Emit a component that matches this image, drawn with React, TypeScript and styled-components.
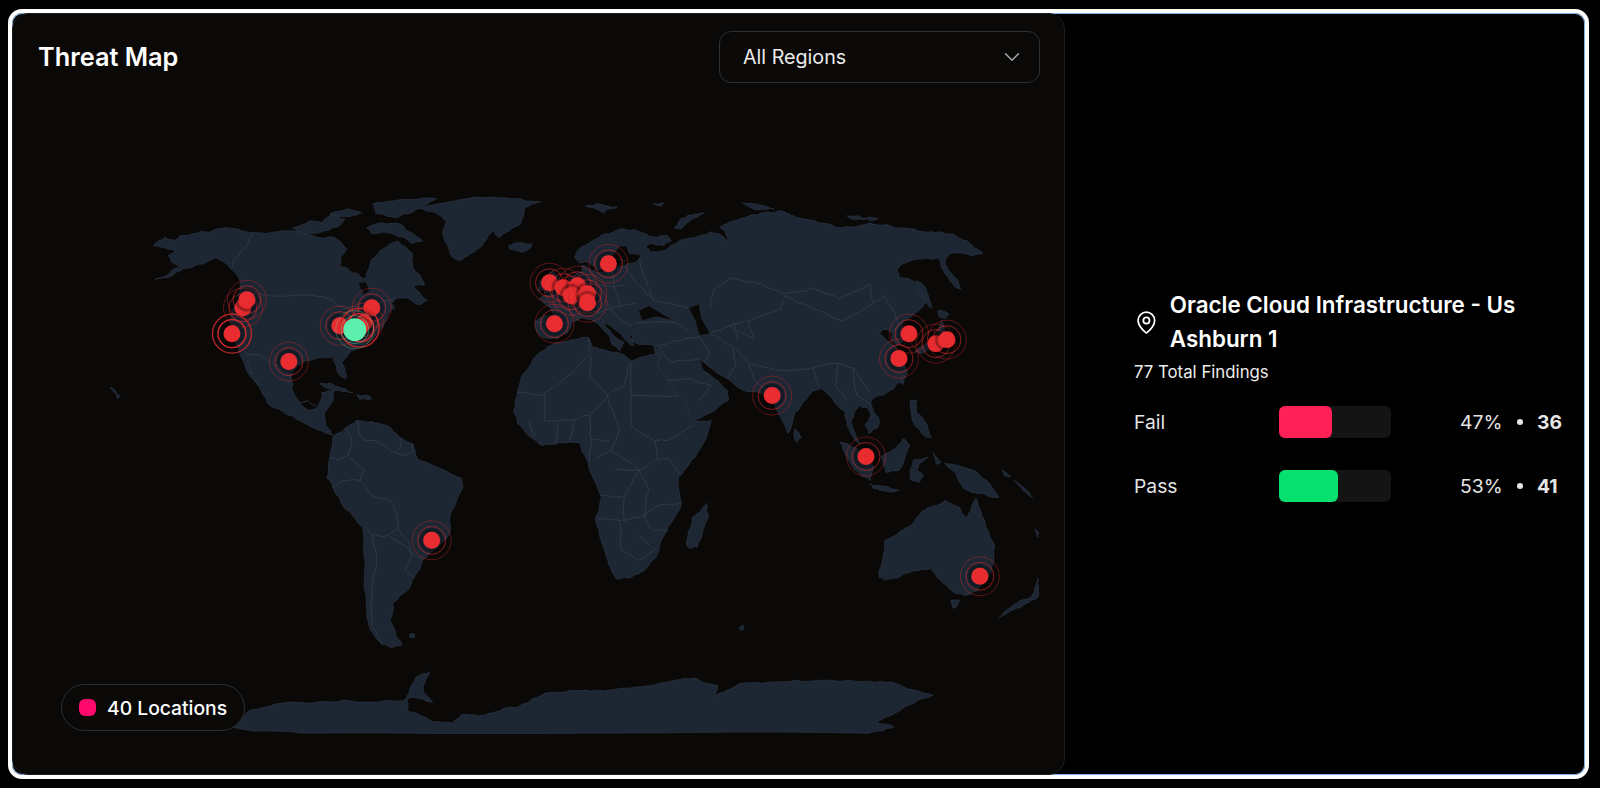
import React from 'react';
import styled, { createGlobalStyle } from 'styled-components';
import { ChevronDown, MapPin } from 'lucide-react';

const GlobalStyle = createGlobalStyle`
  html, body {
    margin: 0;
    height: 100%;
    background: #000;
  }
  body {
    font-family: Inter, "Noto Sans", sans-serif;
    -webkit-font-smoothing: antialiased;
  }
`;

const land = [
  // north america + central america
  'M193,233 L205,231 220,228 240,229 253,232 270,232 293,230 305,233 320,237 330,236 340,240 347,248 341,256 340,265 350,270 358,273 365,278 369,268 372,258 380,250 390,243 398,240 407,247 413,254 413,266 422,278 425,284 414,285 420,292 428,300 420,304 407,297 397,297 392,303 395,308 388,313 385,322 378,332 368,343 358,347 352,350 342,362 347,375 345,378 338,372 335,362 333,357 322,357 307,360 297,365 291,375 292,388 300,402 310,410 318,407 322,392 335,390 332,402 325,412 326,425 333,435 327,433 315,428 300,420 285,413 270,405 262,392 255,378 247,360 252,375 258,385 250,375 242,358 237,345 232,333 230,320 235,305 240,290 240,280 235,272 225,262 215,257 205,262 195,265 180,270 165,277 155,279 170,272 180,265 172,262 168,255 175,250 167,248 153,245 165,236 175,240 180,235 Z',
  // south america
  'M333,437 L345,428 357,420 372,421 387,425 400,437 413,443 416,455 420,460 440,468 462,478 463,488 457,500 452,510 450,533 437,548 423,560 417,573 408,590 393,603 393,612 390,620 396,635 402,645 390,647 380,642 373,633 369,625 367,613 365,590 365,573 363,527 345,508 333,487 327,478 330,457 Z',
  // greenland
  'M417,208 L440,203 467,198 500,197 521,198 541,201 530,205 525,208 524,216 521,223 510,230 500,237 493,230 486,240 480,247 470,253 460,260 452,256 450,250 445,240 443,233 447,220 437,213 427,210 Z',
  // arctic canada
  'M293,227 L310,220 322,222 333,213 345,218 338,226 320,232 300,232 Z',
  'M373,203 L395,200 420,198 437,198 425,204 417,208 408,213 397,217 385,214 376,213 Z',
  'M367,227 L382,222 400,223 412,232 423,240 412,243 402,236 388,232 372,233 Z',
  'M330,213 L348,208 362,212 350,216 Z',
  // iceland, svalbard and other arctic islands
  'M509,245 L518,242 532,243 530,248 520,251 511,249 Z',
  'M586,205 L600,203 618,206 608,208 604,212 596,208 Z',
  'M654,203 L664,202 662,205 Z',
  'M675,227 L680,220 686,217 696,213 705,212 695,217 688,222 682,228 Z',
  'M743,202 L755,203 768,206 775,208 760,209 750,206 Z',
  'M848,215 L860,215 868,218 852,218 Z',
  'M868,217 L879,218 872,220 Z',
  // eurasia
  'M575,257 L580,248 593,240 606,233 621,228 635,229 643,232 657,237 668,235 672,240 664,245 650,243 645,246 652,251 665,250 671,245 680,240 695,237 711,231 720,233 728,240 726,230 721,226 735,220 750,215 765,212 779,210 790,213 800,217 820,222 843,227 860,225 871,222 885,224 904,227 925,231 940,231 954,233 968,240 975,247 984,253 972,255 962,252 950,253 946,263 952,272 960,283 962,288 955,285 948,275 942,265 939,257 925,258 912,260 904,263 898,270 900,277 910,278 918,282 925,293 930,300 922,308 912,316 905,320 903,328 905,340 898,345 893,340 892,331 884,329 880,333 888,340 896,345 905,360 908,370 905,378 895,388 880,395 872,400 875,412 880,420 878,428 870,433 866,425 872,415 868,407 860,405 855,412 852,422 857,435 861,443 855,438 848,425 846,412 838,405 830,395 822,388 812,392 806,400 796,412 789,433 783,420 776,405 771,395 760,392 745,390 728,378 715,370 705,362 700,358 703,368 715,378 728,390 729,400 712,412 692,422 686,410 678,395 668,380 660,367 656,355 655,345 640,344 632,340 636,332 630,335 634,345 627,340 620,332 612,326 602,318 606,326 618,338 625,342 620,350 614,345 610,335 600,325 592,319 582,317 572,322 568,332 558,338 545,337 538,332 536,320 545,315 555,315 548,305 540,298 550,294 565,282 572,275 582,272 582,265 590,268 600,272 612,270 625,265 636,262 642,255 630,253 628,245 620,245 612,255 608,265 598,270 590,262 580,262 Z',
  // uk, ireland
  'M553,270 L558,275 565,285 555,290 545,292 552,283 548,275 Z',
  'M540,280 L546,280 546,288 538,290 Z',
  // africa
  'M518,390 L525,372 539,353 550,345 561,342 575,339 589,337 593,347 607,350 621,353 632,360 645,356 661,353 659,367 668,380 678,395 686,397 690,412 693,420 712,420 704,443 692,460 679,477 682,503 675,518 668,530 660,545 657,557 645,570 632,577 618,579 612,570 607,557 600,535 596,517 602,497 595,480 589,463 582,448 579,442 560,442 543,445 530,436 518,423 514,410 Z',
  'M707,503 L709,517 703,532 698,547 690,548 687,543 691,528 693,517 700,512 Z',
  // australia, tasmania, new zealand
  'M880,577 L884,558 886,540 900,532 914,523 922,512 929,507 938,505 946,500 952,503 961,507 963,513 968,518 972,510 977,498 981,508 984,517 990,532 996,547 995,560 993,570 986,582 979,590 968,595 957,593 948,585 938,577 932,568 920,570 907,573 895,578 886,580 Z',
  'M952,600 L961,600 958,606 954,608 Z',
  'M1039,578 L1040,588 1039,597 1028,603 1014,610 1000,618 1005,612 1018,603 1032,597 1036,588 Z',
  // new guinea and the archipelago
  'M946,463 L960,465 975,470 988,480 1000,497 988,495 975,492 964,487 957,473 Z',
  'M904,438 L911,445 906,458 900,470 887,472 882,457 893,450 Z',
  'M841,442 L857,447 868,458 875,467 871,480 862,475 854,467 846,453 Z',
  'M871,483 L885,486 900,490 888,491 874,488 Z',
  'M914,460 L929,457 920,464 918,470 925,475 920,482 911,478 912,468 Z',
  'M911,400 L918,400 918,413 925,420 932,437 925,435 916,425 912,412 Z',
  'M934,452 L942,462 938,464 Z',
  'M1003,470 L1012,476 1006,476 Z',
  'M1015,480 L1030,492 1034,498 1024,490 Z',
  'M1036,529 L1040,532 1039,537 Z',
  // japan, sakhalin, taiwan, sri lanka
  'M918,280 L925,285 930,298 933,308 928,302 922,292 Z',
  'M939,310 L950,313 946,318 940,316 Z',
  'M943,320 L946,332 943,343 932,348 921,353 916,351 928,342 938,335 Z',
  'M903,375 L907,376 904,384 901,382 Z',
  'M796,428 L802,437 798,442 795,436 Z',
  // caribbean and small islands
  'M320,383 L332,383 345,388 353,392 340,390 326,387 Z',
  'M357,394 L368,395 372,398 360,399 Z',
  'M110,387 L114,389 120,396 117,398 115,392 Z',
  'M410,634 L415,634 415,637 410,637 Z',
  'M740,627 L744,625 745,629 741,630 Z',
  // antarctica
  'M233,727 L240,718 247,712 270,706 293,702 318,702 343,700 370,702 400,701 412,697 433,702 424,692 423,687 430,672 416,677 410,690 407,698 408,711 420,715 433,722 453,723 462,714 478,716 493,713 505,708 520,706 529,702 546,693 566,692 586,690 610,690 636,687 660,683 686,678 700,680 718,685 714,697 728,690 743,683 770,682 796,680 830,680 870,681 893,682 915,690 934,695 915,703 896,713 877,722 895,727 880,731 864,733 600,733 300,733 260,731 Z',
];

const patches = [
  // great lakes
  'M358,282 L366,281 370,290 364,294 Z',
  // baltic
  'M610,262 L618,258 626,260 615,268 Z',
  // black sea
  'M639,310 L650,305 661,312 675,320 657,316 643,320 Z',
  // caspian
  'M689,307 L700,303 702,317 711,333 700,335 696,320 Z',
];

const borders = [
  // canada / us / mexico
  'M253,232 L247,245 235,258 232,266',
  'M240,294 L270,295 320,296 335,302 345,308 372,304 388,300 395,297',
  'M245,353 L262,355 278,365 290,376',
  'M300,402 L308,400 318,407',
  // south america
  'M345,428 L352,440 348,455 338,460 330,457',
  'M357,420 L362,438 372,440 385,445 395,452 400,448 400,437',
  'M413,443 L413,452 405,455 395,452',
  'M350,458 L365,470 360,480 345,480 333,487',
  'M360,480 L370,493 390,500 397,515 398,528 388,535 372,535 365,527',
  'M372,535 L377,560 372,590 372,625 383,645',
  'M390,535 L405,545 415,555 423,560',
  'M398,528 L408,540 412,555 405,570 415,578',
  // africa
  'M518,392 L545,394 560,382 575,370 589,354',
  'M589,337 L592,360 590,375 608,395 625,385 630,362',
  'M632,362 L632,395 658,395 678,395',
  'M543,420 L570,420 590,415 608,395',
  'M590,415 L592,440 590,462',
  'M632,395 L632,425 655,440 668,440 693,425',
  'M608,395 L620,430 612,450 595,458',
  'M612,450 L640,470 655,460 670,458 680,475',
  'M655,440 L660,462',
  'M615,470 L640,470 650,490 645,515 660,505 682,503',
  'M598,518 L625,520 645,515 653,530 668,530',
  'M620,520 L622,550 640,560 657,548',
  'M545,394 L545,420',
  'M575,420 L570,442',
  'M558,422 L556,443',
  'M530,420 L535,436',
  'M590,440 L610,440',
  'M602,495 L625,497',
  'M640,470 L625,497 625,520',
  'M640,535 L650,545',
  // europe + middle east + asia
  'M548,305 L570,310 582,317',
  'M536,322 L568,322',
  'M566,285 L578,305 600,312 622,306 638,302',
  'M612,270 L615,290 622,306',
  'M625,265 L640,285 655,300 672,303 689,307',
  'M640,258 L648,285 655,300',
  'M606,300 L620,318 632,325',
  'M600,285 L625,285',
  'M595,300 L600,312',
  'M636,322 L675,322 690,330',
  'M656,345 L680,340 700,336 710,352 705,362',
  'M660,345 L672,362 700,358',
  'M668,380 L690,378 712,385',
  'M700,400 L712,385',
  'M711,333 L734,347 737,363 728,378',
  'M711,308 L714,290 732,277 761,283 786,293 814,287 840,298 871,283 875,302 885,295 898,320',
  'M711,333 L730,325 750,320 782,308 786,295',
  'M786,295 L814,308 843,320 875,302',
  'M736,347 L750,363 786,370 814,367 839,363 854,367 870,392',
  'M750,363 L755,380 771,395',
  'M730,325 L755,338 750,320',
  'M734,320 L738,338',
  'M814,367 L820,386',
  'M839,363 L836,385 848,400',
  'M854,367 L858,395 872,405',
  'M893,331 L903,322',
];

// subdivide each edge and push the midpoints off the line by a seeded offset, so
// the hand-traced outlines read as coastline and not as long straight segments
function noise(x: number, y: number) {
  const v = Math.sin(x * 12.9898 + y * 78.233) * 43758.5453;
  return v - Math.floor(v) - 0.5;
}

function roughen(d: string, cap: number) {
  const closed = d.includes('Z');
  let pts = (d.match(/-?\d+(?:\.\d+)?,-?\d+(?:\.\d+)?/g) || []).map(s => s.split(',').map(Number));
  if (closed) pts = [...pts, pts[0]];
  for (let pass = 0; pass < 2; pass++) {
    const next: number[][] = [pts[0]];
    for (let i = 1; i < pts.length; i++) {
      const [ax, ay] = pts[i - 1];
      const [bx, by] = pts[i];
      const len = Math.hypot(bx - ax, by - ay);
      if (len > 3) {
        const off = noise(ax + bx, ay - by) * Math.min(len * 0.28, cap * 2);
        next.push([(ax + bx) / 2 - ((by - ay) / len) * off, (ay + by) / 2 + ((bx - ax) / len) * off]);
      }
      next.push(pts[i]);
    }
    pts = next;
  }
  return 'M' + pts.map(p => `${p[0].toFixed(1)},${p[1].toFixed(1)}`).join(' L') + (closed ? ' Z' : '');
}

const landPaths = land.map(d => roughen(d, 1.1));
const borderPaths = borders.map(d => roughen(d, 1.2));

interface Site {
  x: number;
  y: number;
  strong?: boolean;
}

const sites: Site[] = [
  { x: 243, y: 307 },
  { x: 247, y: 299 },
  { x: 232, y: 333, strong: true },
  { x: 289, y: 361 },
  { x: 340, y: 325 },
  { x: 372, y: 307 },
  { x: 364, y: 322 },
  { x: 360, y: 327, strong: true },
  { x: 432, y: 540 },
  { x: 550, y: 282 },
  { x: 564, y: 287 },
  { x: 578, y: 285 },
  { x: 572, y: 295 },
  { x: 588, y: 293 },
  { x: 588, y: 302 },
  { x: 609, y: 263 },
  { x: 555, y: 323 },
  { x: 773, y: 395 },
  { x: 867, y: 456 },
  { x: 900, y: 358 },
  { x: 910, y: 333 },
  { x: 937, y: 343 },
  { x: 948, y: 339 },
  { x: 981, y: 576 },
];

function Marker({ x, y, strong }: Site) {
  return (
    <g>
      <circle cx={x} cy={y} r={10.5} fill="none" stroke="#000" strokeOpacity={0.3} strokeWidth={3} />
      <circle cx={x} cy={y} r={19.5} fill="none" stroke="#c9272b" strokeOpacity={strong ? 0.95 : 0.42} strokeWidth={strong ? 1.3 : 1} />
      <circle cx={x} cy={y} r={14} fill="none" stroke="#d8282c" strokeOpacity={strong ? 1 : 0.62} strokeWidth={strong ? 1.4 : 1} />
      <circle cx={x} cy={y} r={8.5} fill="#e82c2f" />
    </g>
  );
}

function WorldMap() {
  return (
    <MapSvg viewBox="13 90 1052 685" role="img" aria-label="World map">
      {landPaths.map((d, i) => (
        <path key={i} d={d} fill="#1d2633" stroke="#2b3543" strokeWidth={0.7} strokeLinejoin="round" />
      ))}
      {patches.map((d, i) => (
        <path key={i} d={d} fill="#0a0908" stroke="#2b3543" strokeWidth={0.5} />
      ))}
      {borderPaths.map((d, i) => (
        <path key={i} d={d} fill="none" stroke="#323d4c" strokeWidth={0.8} strokeLinejoin="round" />
      ))}
      {sites.map((site, i) => (
        <Marker key={i} {...site} />
      ))}
      <circle cx={355} cy={329} r={19} fill="none" stroke="#5ef0b0" strokeOpacity={0.3} />
      <circle cx={355} cy={329} r={14} fill="none" stroke="#5ef0b0" strokeOpacity={0.4} />
      <circle cx={355} cy={329} r={11.5} fill="#5cefae" />
    </MapSvg>
  );
}

function StatusRow({ label, percent, count, color }: { label: string; percent: number; count: number; color: string }) {
  return (
    <Row>
      <RowLabel>{label}</RowLabel>
      <Track>
        <Fill $color={color} style={{ width: `${percent}%` }} />
      </Track>
      <RowValue>
        <Percent>{percent}%</Percent>
        <Bullet />
        <Count>{count}</Count>
      </RowValue>
    </Row>
  );
}

export default function App() {
  return (
    <>
      <GlobalStyle />
      <Page>
        <Frame>
          <MapCard>
            <Header>
              <Title>Threat Map</Title>
              <Select>
                <span>All Regions</span>
                <ChevronDown size={26} strokeWidth={1.4} color="#a3a3a3" />
              </Select>
            </Header>
            <WorldMap />
            <Legend>
              <LegendDot />
              40 Locations
            </Legend>
          </MapCard>
          <Side>
            <SiteTitle>
              <MapPin size={29} strokeWidth={1.7} color="#fff" />
              <SiteName>Oracle Cloud Infrastructure - Us Ashburn 1</SiteName>
            </SiteTitle>
            <Findings>77 Total Findings</Findings>
            <Rows>
              <StatusRow label="Fail" percent={47} count={36} color="#ff2058" />
              <StatusRow label="Pass" percent={53} count={41} color="#05e06f" />
            </Rows>
          </Side>
        </Frame>
      </Page>
    </>
  );
}

const Page = styled.div`
  box-sizing: border-box;
  height: 100vh;
  padding: 9px 11px 9px 8px;
  background: #000;
`;

const Frame = styled.div`
  box-sizing: border-box;
  display: flex;
  height: 100%;
  border: 4px solid #fff;
  border-radius: 14px;
  box-shadow: inset 0 0 0 1px #7fb0ea;
  background: #000;
  overflow: hidden;
`;

const MapCard = styled.section`
  position: relative;
  box-sizing: border-box;
  display: flex;
  flex-direction: column;
  width: 1053px;
  flex: none;
  background: #0a0908;
  border: 1px solid #1c1c1c;
  border-radius: 16px;
`;

const Header = styled.header`
  display: flex;
  justify-content: space-between;
  align-items: center;
  padding: 17px 24px 0 25px;
`;

const Title = styled.h2`
  margin: 0 0 2px;
  font-size: 25.3px;
  font-weight: 600;
  color: #fff;
`;

const Select = styled.div`
  box-sizing: border-box;
  display: flex;
  align-items: center;
  justify-content: space-between;
  width: 321px;
  height: 52px;
  padding: 0 14px 0 23px;
  border: 1px solid #303030;
  border-radius: 12px;
  font-size: 19.7px;
  color: #ececec;
`;

const MapSvg = styled.svg`
  display: block;
  width: 1051px;
  height: 684px;
  margin-top: 8px;
  flex: none;
`;

const Legend = styled.div`
  position: absolute;
  left: 48px;
  bottom: 43px;
  box-sizing: border-box;
  display: flex;
  align-items: center;
  gap: 11px;
  height: 47px;
  padding: 0 17px;
  border: 1px solid #2e2e2e;
  border-radius: 24px;
  background: #0a0908;
  font-size: 19.3px;
  font-weight: 500;
  color: #fff;
`;

const LegendDot = styled.i`
  display: block;
  width: 17px;
  height: 17px;
  border-radius: 6px;
  background: #ff0a6c;
`;

const Side = styled.aside`
  flex: 1;
  display: flex;
  flex-direction: column;
  justify-content: center;
  padding: 2px 24px 0 69px;
  color: #fff;
`;

const SiteTitle = styled.div`
  display: flex;
  align-items: center;
  gap: 11px;
`;

const SiteName = styled.h3`
  margin: 0;
  font-size: 22.4px;
  font-weight: 600;
  line-height: 34px;
  color: #fff;
`;

const Findings = styled.p`
  margin: 4px 0 0;
  font-size: 16.8px;
  line-height: 24px;
  color: #ededed;
`;

const Rows = styled.div`
  display: flex;
  flex-direction: column;
  gap: 32px;
  margin-top: 22px;
`;

const Row = styled.div`
  display: grid;
  grid-template-columns: 145px 112px 1fr;
  align-items: center;
`;

const RowLabel = styled.span`
  font-size: 19.3px;
  color: #e5e5e5;
`;

const Track = styled.div`
  height: 32px;
  border-radius: 6px;
  background: #141414;
`;

const Fill = styled.div<{ $color: string }>`
  height: 100%;
  border-radius: 6px;
  background: ${p => p.$color};
`;

const RowValue = styled.div`
  display: flex;
  align-items: center;
  padding-left: 69px;
  font-size: 19.3px;
  color: #e5e5e5;
`;

const Percent = styled.span`
  width: 57px;
`;

const Bullet = styled.i`
  display: block;
  width: 6px;
  height: 6px;
  border-radius: 50%;
  background: #e5e5e5;
  margin-right: 14px;
`;

const Count = styled.b`
  font-weight: 700;
`;
